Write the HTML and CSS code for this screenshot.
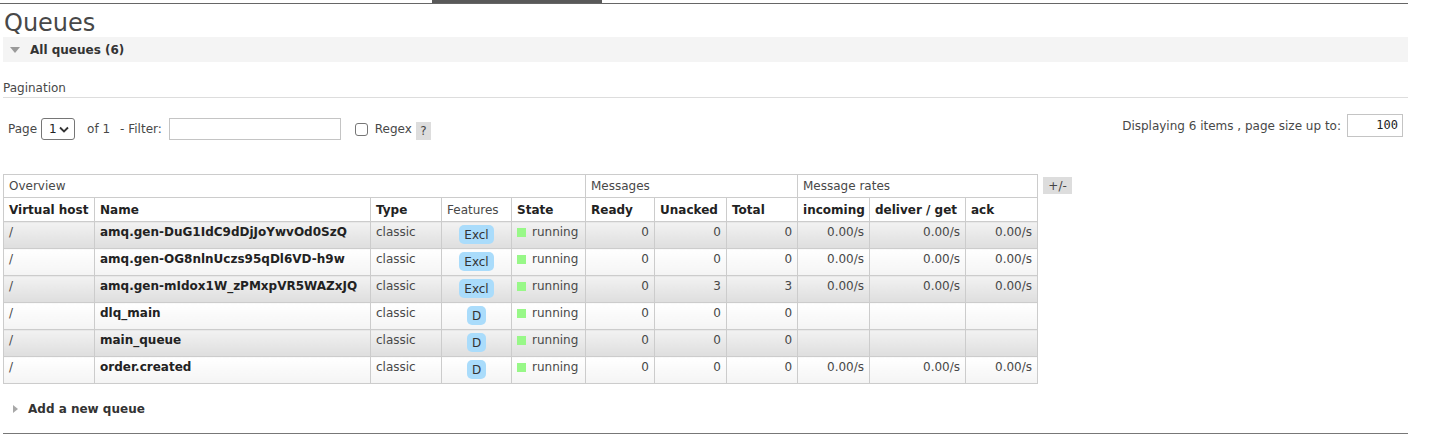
FILE: index.html
```html
<!DOCTYPE html>
<html>
<head>
<meta charset="utf-8">
<link rel="stylesheet" href="styles.css">
</head>
<body>
<div class="topbar"><div class="tab"></div></div>
<div class="main">
  <h1 class="title">Queues</h1>
  <div class="band">
    <span class="tri-down"></span>
    <span class="band-label">All queues (6)</span>
  </div>
  <div class="pag-head">Pagination</div>
  <div class="pag-row">
    <div class="pag-left">
      <span>Page</span>
      <span class="select"><span>1</span>
        <svg width="10" height="7" viewBox="0 0 10 7"><path d="M1 1.5 L5 5.5 L9 1.5" fill="none" stroke="#333" stroke-width="1.8"/></svg>
      </span>
      <span class="of">of 1</span>
      <span class="filter-label">- Filter:</span>
      <span class="text-input wide"></span>
      <span class="checkbox"></span>
      <span class="regex">Regex</span>
      <span class="help">?</span>
    </div>
    <div class="pag-right">
      <span>Displaying 6 items , page size up to:</span>
      <span class="size-input">100</span>
    </div>
  </div>

  <div class="table-wrap">
    <table class="list">
      <colgroup>
        <col class="c-vhost"><col class="c-name"><col class="c-type"><col class="c-feat"><col class="c-state">
        <col class="c-ready"><col class="c-unacked"><col class="c-total">
        <col class="c-inc"><col class="c-del"><col class="c-ack">
      </colgroup>
      <thead>
        <tr class="group">
          <th colspan="5">Overview</th>
          <th colspan="3">Messages</th>
          <th colspan="3">Message rates</th>
        </tr>
        <tr class="cols">
          <th>Virtual host</th><th>Name</th><th>Type</th><th class="light">Features</th><th>State</th>
          <th>Ready</th><th>Unacked</th><th>Total</th>
          <th>incoming</th><th>deliver / get</th><th>ack</th>
        </tr>
      </thead>
      <tbody>
        <tr class="alt2">
          <td>/</td><td class="name">amq.gen-DuG1IdC9dDjJoYwvOd0SzQ</td><td>classic</td>
          <td class="c"><span class="badge">Excl</span></td>
          <td><span class="dot"></span>running</td>
          <td class="r">0</td><td class="r">0</td><td class="r">0</td>
          <td class="r">0.00/s</td><td class="r">0.00/s</td><td class="r">0.00/s</td>
        </tr>
        <tr class="alt1">
          <td>/</td><td class="name">amq.gen-OG8nlnUczs95qDl6VD-h9w</td><td>classic</td>
          <td class="c"><span class="badge">Excl</span></td>
          <td><span class="dot"></span>running</td>
          <td class="r">0</td><td class="r">0</td><td class="r">0</td>
          <td class="r">0.00/s</td><td class="r">0.00/s</td><td class="r">0.00/s</td>
        </tr>
        <tr class="alt2">
          <td>/</td><td class="name">amq.gen-mIdox1W_zPMxpVR5WAZxJQ</td><td>classic</td>
          <td class="c"><span class="badge">Excl</span></td>
          <td><span class="dot"></span>running</td>
          <td class="r">0</td><td class="r">3</td><td class="r">3</td>
          <td class="r">0.00/s</td><td class="r">0.00/s</td><td class="r">0.00/s</td>
        </tr>
        <tr class="alt1">
          <td>/</td><td class="name">dlq_main</td><td>classic</td>
          <td class="c"><span class="badge">D</span></td>
          <td><span class="dot"></span>running</td>
          <td class="r">0</td><td class="r">0</td><td class="r">0</td>
          <td></td><td></td><td></td>
        </tr>
        <tr class="alt2">
          <td>/</td><td class="name">main_queue</td><td>classic</td>
          <td class="c"><span class="badge">D</span></td>
          <td><span class="dot"></span>running</td>
          <td class="r">0</td><td class="r">0</td><td class="r">0</td>
          <td></td><td></td><td></td>
        </tr>
        <tr class="alt1">
          <td>/</td><td class="name">order.created</td><td>classic</td>
          <td class="c"><span class="badge">D</span></td>
          <td><span class="dot"></span>running</td>
          <td class="r">0</td><td class="r">0</td><td class="r">0</td>
          <td class="r">0.00/s</td><td class="r">0.00/s</td><td class="r">0.00/s</td>
        </tr>
      </tbody>
    </table>
    <span class="plusminus">+/-</span>
  </div>

  <div class="add">
    <span class="tri-right"></span>
    <span class="add-label">Add a new queue</span>
  </div>
</div>
<div class="bottom-line"></div>
</body>
</html>
```
FILE: styles.css
```css
html, body {
  margin: 0;
  padding: 0;
  background: #fff;
}
body {
  font-family: "DejaVu Sans", Verdana, sans-serif;
  font-size: 12px;
  line-height: 14px;
  color: #484848;
  width: 1408px;
}
.topbar {
  height: 3px;
  border-bottom: 1px solid #666;
  display: flex;
}
.tab {
  margin-left: 432px;
  width: 170px;
  height: 3px;
  background: #595959;
}
.main {
  margin-left: 3px;
  width: 1405px;
}
.title {
  margin: 6px 0 0 1px;
  font-size: 24px;
  line-height: 27px;
  font-weight: normal;
  color: #484848;
}
.band {
  height: 25px;
  background: #f4f4f4;
  display: flex;
  align-items: center;
  gap: 10px;
  padding-left: 7px;
}
.tri-down {
  width: 0;
  height: 0;
  border-left: 5px solid transparent;
  border-right: 5px solid transparent;
  border-top: 6px solid #9a9a9a;
  margin-top: 1px;
}
.band-label {
  font-weight: bold;
  color: #333;
}
.pag-head {
  margin-top: 19px;
  padding-bottom: 2px;
  border-bottom: 1px solid #ddd;
}
.pag-row {
  display: flex;
  justify-content: space-between;
  align-items: flex-start;
  margin-top: 16px;
}
.pag-left {
  display: flex;
  align-items: center;
  height: 22px;
  margin-top: 4px;
  padding-left: 5px;
}
.select {
  display: inline-flex;
  align-items: center;
  justify-content: space-between;
  box-sizing: border-box;
  width: 34px;
  height: 22px;
  margin-left: 4px;
  padding: 0 5px 0 7px;
  border: 1px solid #767676;
  border-radius: 3px;
  color: #222;
}
.of {
  margin-left: 12px;
}
.filter-label {
  margin-left: 10px;
}
.text-input {
  box-sizing: border-box;
  height: 22px;
  border: 1px solid #c4c4c4;
  background: #fff;
}
.text-input.wide {
  width: 172px;
  margin-left: 7px;
}
.checkbox {
  box-sizing: border-box;
  width: 13px;
  height: 13px;
  border: 1px solid #767676;
  border-radius: 3px;
  margin-left: 14px;
}
.regex {
  margin-left: 7px;
}
.help {
  margin-left: 4px;
  margin-top: 4px;
  width: 15px;
  height: 18px;
  background: #ddd;
  display: inline-flex;
  align-items: center;
  justify-content: center;
  color: #444;
}
.pag-right {
  display: flex;
  align-items: center;
  height: 23px;
  padding-right: 5px;
}
.size-input {
  box-sizing: border-box;
  width: 56px;
  height: 23px;
  margin-left: 6px;
  border: 1px solid #c4c4c4;
  font-family: "DejaVu Sans Mono", "Liberation Mono", monospace;
  font-size: 12px;
  color: #222;
  text-align: right;
  padding-right: 4px;
  line-height: 21px;
}
.table-wrap {
  margin-top: 34px;
  display: flex;
  align-items: flex-start;
  gap: 5px;
}
table.list {
  border-collapse: collapse;
  table-layout: fixed;
  width: 1034px;
}
.c-vhost { width: 91px; }
.c-name { width: 276px; }
.c-type { width: 71px; }
.c-feat { width: 70px; }
.c-state { width: 74px; }
.c-ready { width: 69px; }
.c-unacked { width: 72px; }
.c-total { width: 71px; }
.c-inc { width: 72px; }
.c-del { width: 96px; }
.c-ack { width: 72px; }
table.list th,
table.list td {
  border: 1px solid #ccc;
  text-align: left;
  vertical-align: top;
  white-space: nowrap;
  overflow: hidden;
}
table.list tr.group th {
  font-weight: normal;
  padding: 4px 5px;
  height: 14px;
  color: #484848;
  background: #fff;
}
table.list tr.cols th {
  font-weight: bold;
  padding: 5px 5px 4px;
  height: 14px;
  color: #222;
  background: #fff;
}
table.list tr.cols th.light {
  font-weight: normal;
  color: #484848;
}
table.list td {
  padding: 3px 5px 4px;
  height: 19px;
}
table.list tr.alt1 td {
  background: linear-gradient(#ffffff, #f4f4f4);
}
table.list tr.alt2 td {
  background: linear-gradient(#f2f2f2, #dedede);
}
table.list td.name {
  font-weight: bold;
  color: #222;
}
table.list td.r {
  text-align: right;
}
table.list td.c {
  text-align: center;
}
.badge {
  display: inline-block;
  vertical-align: top;
  height: 19px;
  line-height: 20px;
  padding: 0 5px;
  border-radius: 5px;
  background: #aadcfb;
  color: #333;
}
.dot {
  display: inline-block;
  width: 9px;
  height: 9px;
  background: #98f888;
  margin-right: 6px;
  vertical-align: -1px;
}
.plusminus {
  margin-top: 3px;
  width: 29px;
  height: 17px;
  background: #ddd;
  display: flex;
  align-items: center;
  justify-content: center;
  color: #444;
}
.add {
  margin-top: 18px;
  display: flex;
  align-items: center;
  gap: 10px;
  padding-left: 10px;
  height: 14px;
}
.tri-right {
  width: 0;
  height: 0;
  border-top: 4px solid transparent;
  border-bottom: 4px solid transparent;
  border-left: 5px solid #a8a8a8;
}
.add-label {
  font-weight: bold;
  color: #333;
}
.bottom-line {
  margin: 17px 0 0 3px;
  width: 1405px;
  border-top: 1px solid #777;
}
```
